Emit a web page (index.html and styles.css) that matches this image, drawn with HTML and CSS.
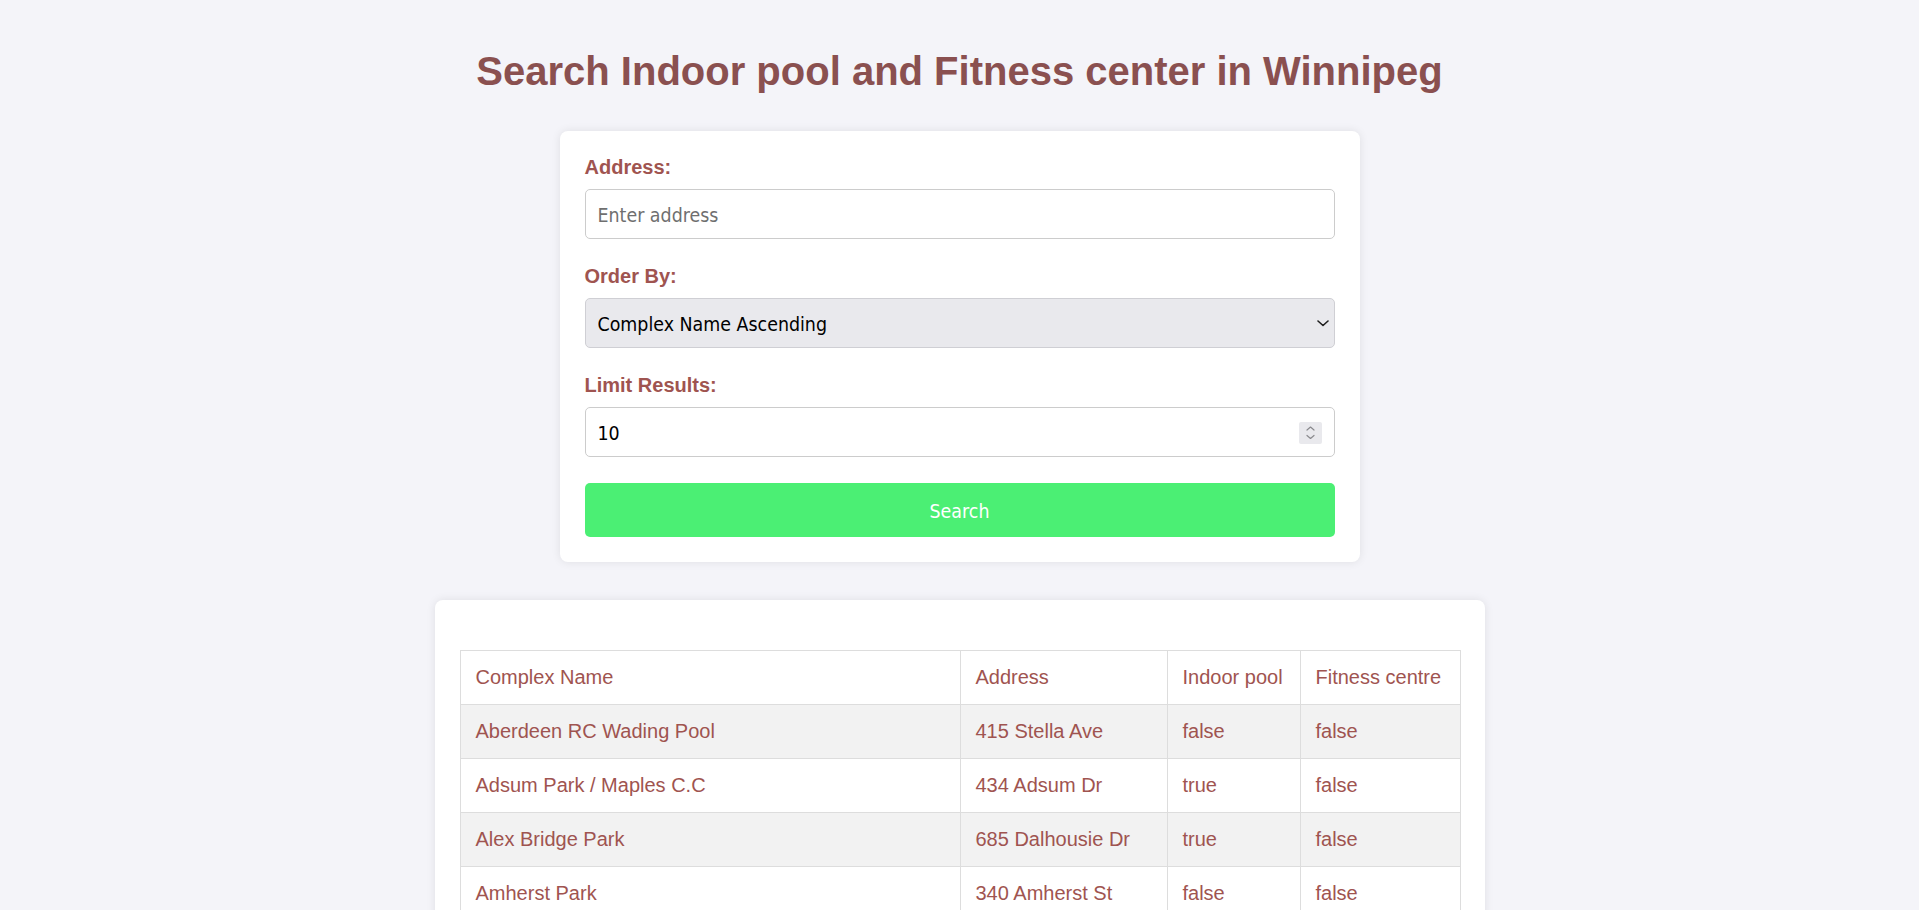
FILE: index.html
```html
<!DOCTYPE html>
<html lang="en">
<head>
<meta charset="utf-8">
<title>Search Indoor pool and Fitness center in Winnipeg</title>
<link rel="stylesheet" href="styles.css">
</head>
<body>
<h1 class="page-title">Search Indoor pool and Fitness center in Winnipeg</h1>

<form class="card search-card">
  <div class="form-group">
    <label class="field-label" for="address">Address:</label>
    <input class="field" id="address" type="text" placeholder="Enter address">
  </div>
  <div class="form-group">
    <label class="field-label" for="order">Order By:</label>
    <div class="control-wrap">
      <select class="field field-select" id="order">
        <option>Complex Name Ascending</option>
        <option>Complex Name Descending</option>
        <option>Address Ascending</option>
        <option>Address Descending</option>
      </select>
      <svg class="select-chevron" width="12" height="7" viewBox="0 0 12 7" aria-hidden="true"><path d="M1 1 L6 5.5 L11 1" fill="none" stroke="#1f1f1f" stroke-width="1.6" stroke-linecap="round" stroke-linejoin="round"/></svg>
    </div>
  </div>
  <div class="form-group">
    <label class="field-label" for="limit">Limit Results:</label>
    <div class="control-wrap">
      <input class="field field-number" id="limit" type="number" value="10">
      <span class="spinner" aria-hidden="true">
        <svg width="23" height="22" viewBox="0 0 23 22"><path d="M8 8 L11.5 5 L15 8" fill="none" stroke="#8a8a8e" stroke-width="1.2" stroke-linecap="round" stroke-linejoin="round"/><path d="M8 13.5 L11.5 16.5 L15 13.5" fill="none" stroke="#8a8a8e" stroke-width="1.2" stroke-linecap="round" stroke-linejoin="round"/></svg>
      </span>
    </div>
  </div>
  <button class="search-btn" type="button">Search</button>
</form>

<section class="card results-card">
  <table class="results">
    <colgroup>
      <col class="col-name">
      <col class="col-address">
      <col class="col-pool">
      <col class="col-fitness">
    </colgroup>
    <thead>
      <tr><th>Complex Name</th><th>Address</th><th>Indoor pool</th><th>Fitness centre</th></tr>
    </thead>
    <tbody>
      <tr><td>Aberdeen RC Wading Pool</td><td>415 Stella Ave</td><td>false</td><td>false</td></tr>
      <tr><td>Adsum Park / Maples C.C</td><td>434 Adsum Dr</td><td>true</td><td>false</td></tr>
      <tr><td>Alex Bridge Park</td><td>685 Dalhousie Dr</td><td>true</td><td>false</td></tr>
      <tr><td>Amherst Park</td><td>340 Amherst St</td><td>false</td><td>false</td></tr>
      <tr><td>Archwood Park</td><td>499 Archibald St</td><td>false</td><td>false</td></tr>
      <tr><td>Assiniboine Park</td><td>55 Pavilion Cres</td><td>false</td><td>false</td></tr>
      <tr><td>Bernie Wolfe Community Centre</td><td>1 Bernie Wolfe Way</td><td>false</td><td>true</td></tr>
      <tr><td>Bonivital Pool</td><td>1215 Archibald St</td><td>true</td><td>true</td></tr>
      <tr><td>Boyd Park</td><td>50 Boyd Ave</td><td>false</td><td>false</td></tr>
      <tr><td>Brooklands Park</td><td>2035 Elgin Ave W</td><td>false</td><td>false</td></tr>
    </tbody>
  </table>
</section>
</body>
</html>
```

FILE: styles.css
```css
* {
  box-sizing: border-box;
}

html, body {
  background: #f4f4f9;
}

body {
  margin: 0;
  padding: 20px;
  font-family: "Liberation Sans", Arial, sans-serif;
  font-size: 20px;
  color: #9f5450;
}

.page-title {
  margin: 28px 0 37px;
  font-size: 40px;
  line-height: 46px;
  font-weight: bold;
  text-align: center;
  color: #8a5050;
}

.card {
  background: #ffffff;
  border-radius: 8px;
  box-shadow: 0 0 10px rgba(0, 0, 0, 0.09);
  margin: 0 auto;
}

.search-card {
  width: 800px;
  padding: 25px;
  margin-bottom: 38px;
}

.form-group {
  margin-bottom: 26px;
}

.field-label {
  display: block;
  margin-bottom: 10px;
  font-weight: bold;
  line-height: 23px;
  color: #9f5450;
}

.control-wrap {
  position: relative;
}

.field {
  display: block;
  width: 100%;
  height: 50px;
  padding: 3px 12px 0;
  border: 1px solid #cccccc;
  border-radius: 5px;
  background: #ffffff;
  font-family: "DejaVu Sans Condensed", Tahoma, sans-serif;
  font-size: 19.4px;
  color: #000000;
  outline: none;
}

.field::placeholder {
  color: #6f6f6f;
  opacity: 1;
}

.field-select {
  -webkit-appearance: none;
  appearance: none;
  background: #e9e9ed;
  border-color: #cfcfd4;
}

.select-chevron {
  position: absolute;
  right: 6px;
  top: 22px;
}

.field-number {
  -moz-appearance: textfield;
}

.field-number::-webkit-inner-spin-button,
.field-number::-webkit-outer-spin-button {
  -webkit-appearance: none;
  margin: 0;
}

.spinner {
  position: absolute;
  right: 13px;
  top: 15px;
  width: 23px;
  height: 22px;
  background: #e9e9ed;
  border-radius: 2px;
  display: flex;
}

.search-btn {
  display: block;
  width: 100%;
  height: 54px;
  padding: 2px 0 0;
  border: none;
  border-radius: 5px;
  background: #4bef74;
  color: #ffffff;
  font-family: "DejaVu Sans Condensed", Tahoma, sans-serif;
  font-size: 19.4px;
  cursor: pointer;
}

.results-card {
  width: 1050px;
  padding: 25px;
}

.results {
  width: 100%;
  margin-top: 25px;
  border-collapse: collapse;
  table-layout: fixed;
  color: #9f5450;
}

.col-name { width: 500px; }
.col-address { width: 207px; }
.col-pool { width: 133px; }
.col-fitness { width: 160px; }

.results th,
.results td {
  padding: 15px;
  border: 1px solid #dddddd;
  text-align: left;
  font-weight: normal;
  line-height: 23px;
  white-space: nowrap;
}

.results thead tr {
  background: #ffffff;
}

.results tbody tr:nth-child(odd) {
  background: #f2f2f2;
}
```
